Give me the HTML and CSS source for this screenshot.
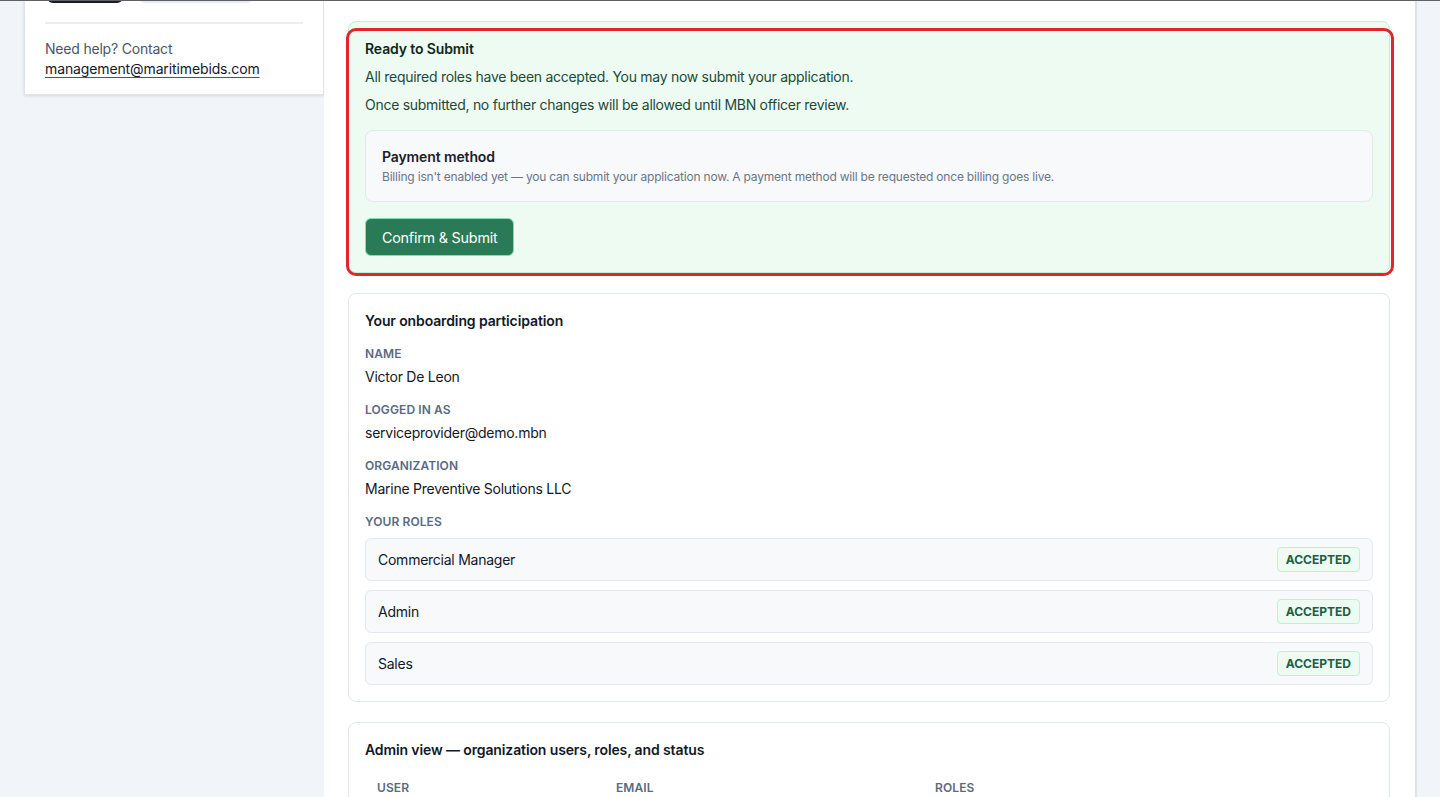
FILE: index.html
```html
<!DOCTYPE html>
<html lang="en">
  <head>
    <title>Onboarding – Submit</title>
    <link rel="stylesheet" href="styles.css">
  </head>
  <body>
    <div class="topline"></div>
    <div class="layout">
      <aside class="sidebar">
        <div class="sideCard">
          <div class="sideButtons">
            <button class="btnDark"></button>
            <button class="btnLight"></button>
          </div>
          <hr class="divider" />
          <p class="help">Need help? Contact</p>
          <a class="helpLink" href="#">management@maritimebids.com</a>
        </div>
      </aside>

      <main class="main">
        <section class="card readyCard">
          <h3 class="cardTitle">Ready to Submit</h3>
          <p class="readyText">All required roles have been accepted. You may now submit your application.</p>
          <p class="readyText">Once submitted, no further changes will be allowed until MBN officer review.</p>
          <div class="payment">
            <p class="paymentTitle">Payment method</p>
            <p class="paymentNote">Billing isn't enabled yet — you can submit your application now. A payment method will be requested once billing goes live.</p>
          </div>
          <button class="btnSubmit">Confirm &amp; Submit</button>
          <!-- annotation frame drawn over the card -->
          <div class="highlight"></div>
        </section>

        <section class="card">
          <h3 class="cardTitle">Your onboarding participation</h3>
          <div class="field">
            <p class="label">Name</p>
            <p class="value">Victor De Leon</p>
          </div>
          <div class="field">
            <p class="label">Logged in as</p>
            <p class="value">serviceprovider@demo.mbn</p>
          </div>
          <div class="field">
            <p class="label">Organization</p>
            <p class="value">Marine Preventive Solutions LLC</p>
          </div>
          <p class="label">Your roles</p>
          <div class="roles">
            <div class="role">
              <span>Commercial Manager</span>
              <span class="badge">Accepted</span>
            </div>
            <div class="role">
              <span>Admin</span>
              <span class="badge">Accepted</span>
            </div>
            <div class="role">
              <span>Sales</span>
              <span class="badge">Accepted</span>
            </div>
          </div>
        </section>

        <section class="card">
          <h3 class="cardTitle">Admin view — organization users, roles, and status</h3>
          <div class="tableHead">
            <span>User</span>
            <span>Email</span>
            <span>Roles</span>
          </div>
        </section>
      </main>
    </div>
  </body>
</html>
```

FILE: styles.css
```css
body {
  margin: 0;
  background-color: #f1f4f8;
  font-family: Inter, "Noto Sans", sans-serif;
  color: #111827;
  font-size: 14px;
  line-height: 20px;
  overflow: hidden;
}
p {
  margin: 0;
}
.topline {
  height: 1px;
  background-color: #5f6165;
  position: relative;
  z-index: 2;
}
.layout {
  display: flex;
  align-items: flex-start;
}
.sidebar {
  width: 324px;
  padding-left: 24px;
  box-sizing: border-box;
  flex-shrink: 0;
}
.sideCard {
  margin-top: -39px;
  background-color: #fff;
  border: 1px solid #dfe3ea;
  box-shadow: 0 1px 3px rgba(15, 23, 42, 0.12);
  padding: 0 20px 15px 20px;
}
.sideButtons {
  display: flex;
  gap: 16px;
  padding-left: 2px;
}
.btnDark,
.btnLight {
  height: 40px;
  border-radius: 6px;
  border: none;
}
.btnDark {
  width: 76px;
  background-color: #1b1e25;
}
.btnLight {
  width: 114px;
  background-color: #e6eaf1;
}
.divider {
  border: none;
  height: 2px;
  background-color: #eceef2;
  margin: 19px 0 15px 0;
}
.help {
  color: #4a5568;
  letter-spacing: -0.2px;
}
.helpLink {
  color: #111827;
  font-size: 14px;
  letter-spacing: -0.12px;
  text-decoration: underline;
  text-decoration-color: #4b5563;
  text-underline-offset: 3px;
}
.main {
  width: 1093px;
  flex-shrink: 0;
  min-height: 800px;
  background-color: #fff;
  border-right: 2px solid #dde2ea;
  padding: 20px 25px 20px 24px;
  box-sizing: border-box;
  display: flex;
  flex-direction: column;
  gap: 20px;
}
.card {
  border: 1px solid #e3e7ef;
  border-radius: 8px;
  padding: 16px;
  background-color: #fff;
  position: relative;
  display: flex;
  flex-direction: column;
}
.cardTitle {
  margin: 1px 0 0 0;
  font-size: 14px;
  line-height: 20px;
  font-weight: 600;
  letter-spacing: -0.12px;
  color: #111827;
}
.readyCard {
  background-color: #edfbf3;
  border-color: #bff0d2;
}
.readyCard .cardTitle {
  color: #10261c;
}
.readyText {
  margin-top: 8px;
  color: #1d4a37;
  letter-spacing: -0.28px;
}
.payment {
  margin-top: 15px;
  background-color: #f7f9fb;
  border: 1px solid #e3e8ef;
  border-radius: 8px;
  padding: 16px 16px 16px 16px;
}
.paymentTitle {
  font-weight: 600;
  letter-spacing: -0.12px;
  color: #1a202c;
}
.paymentNote {
  margin-top: 2px;
  font-size: 12px;
  line-height: 16px;
  letter-spacing: -0.2px;
  color: #6b7689;
}
.btnSubmit {
  margin-top: 16px;
  align-self: flex-start;
  height: 38px;
  padding: 0 16px;
  background-color: #2a7a58;
  border: 1px solid #7fe0aa;
  border-radius: 6px;
  color: #fff;
  font-family: inherit;
  font-size: 14.3px;
  letter-spacing: -0.2px;
}
.highlight {
  position: absolute;
  top: 6px;
  left: -3px;
  right: -5px;
  bottom: -4px;
  border: 3px solid #e0262c;
  border-radius: 10px;
  pointer-events: none;
}
.field {
  margin-top: 15px;
}
.label {
  font-size: 12px;
  line-height: 16px;
  font-weight: 600;
  letter-spacing: 0.1px;
  text-transform: uppercase;
  color: #5b6a82;
}
.value {
  margin-top: 5px;
  color: #111827;
  letter-spacing: -0.25px;
}
.field + .label {
  margin-top: 15px;
}
.roles {
  margin-top: 8px;
  display: flex;
  flex-direction: column;
  gap: 9px;
}
.role {
  display: flex;
  justify-content: space-between;
  align-items: center;
  padding: 8px 12px 8px 12px;
  min-height: 25px;
  background-color: #f7f9fb;
  border: 1px solid #e3e8ef;
  border-radius: 6px;
  color: #111827;
  letter-spacing: -0.25px;
}
.badge {
  box-sizing: border-box;
  height: 25px;
  display: flex;
  align-items: center;
  padding: 0 8px;
  background-color: #edfbf3;
  border: 1px solid #bff0d2;
  border-radius: 4px;
  font-size: 12px;
  font-weight: 700;
  letter-spacing: 0px;
  text-transform: uppercase;
  color: #1e5e42;
}
.tableHead {
  margin-top: 20px;
  display: grid;
  grid-template-columns: 239px 319px 1fr;
  padding: 0 12px;
  font-size: 12px;
  line-height: 16px;
  font-weight: 600;
  letter-spacing: 0.1px;
  text-transform: uppercase;
  color: #5b6a82;
}
```
